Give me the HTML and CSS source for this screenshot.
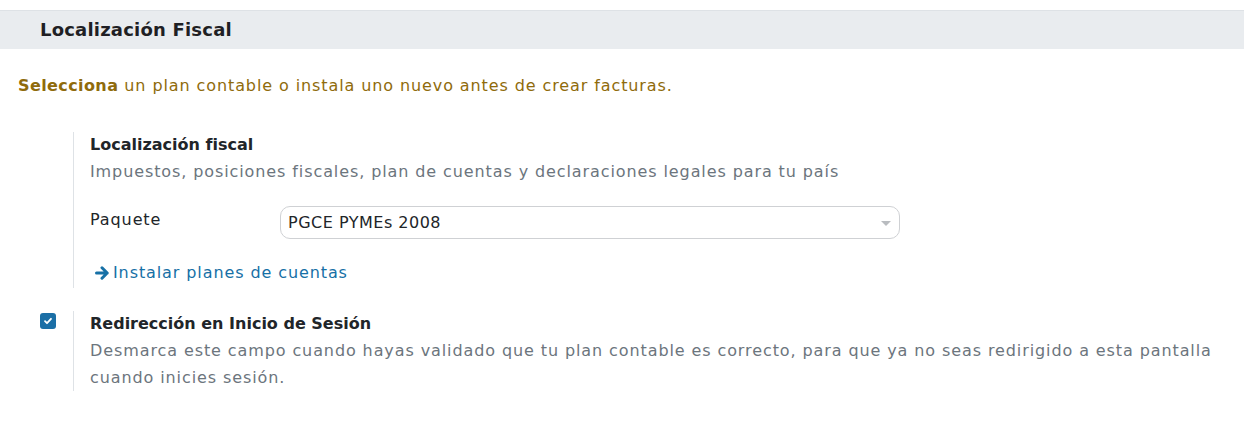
FILE: index.html
```html
<!DOCTYPE html>
<html lang="es">
<head>
<meta charset="utf-8">
<link rel="stylesheet" href="styles.css">
</head>
<body>
<div class="header">Localización Fiscal</div>
<div class="warning"><b>Selecciona</b> un plan contable o instala uno nuevo antes de crear facturas.</div>
<div class="settings">
  <div class="setting setting-first">
    <div class="left"></div>
    <div class="pane">
      <div class="title">Localización fiscal</div>
      <div class="desc">Impuestos, posiciones fiscales, plan de cuentas y declaraciones legales para tu país</div>
      <div class="field">
        <div class="label">Paquete</div>
        <div class="select">
          <span>PGCE PYMEs 2008</span>
          <span class="caret"></span>
        </div>
      </div>
      <a class="link" href="#"><svg class="arrow" width="15" height="14" viewBox="0 0 15 14"><path d="M1.5 7H12.2M7 1.8L12.2 7L7 12.2" fill="none" stroke="currentColor" stroke-width="3" stroke-linecap="round" stroke-linejoin="round"/></svg>Instalar planes de cuentas</a>
    </div>
  </div>
  <div class="setting setting-second">
    <div class="left"><span class="check"><svg width="10" height="10" viewBox="0 0 10 10"><path d="M2 5.2l2 2 4-4.4" fill="none" stroke="#fff" stroke-width="1.8" stroke-linecap="round" stroke-linejoin="round"/></svg></span></div>
    <div class="pane">
      <div class="title">Redirección en Inicio de Sesión</div>
      <div class="desc">Desmarca este campo cuando hayas validado que tu plan contable es correcto, para que ya no seas redirigido a esta pantalla cuando inicies sesión.</div>
    </div>
  </div>
</div>
</body>
</html>
```
FILE: styles.css
```css
body {
  margin: 0;
  background: #fff;
  font-family: "DejaVu Sans", "Open Sans", sans-serif;
  color: #212529;
  font-size: 16px;
  letter-spacing: 0.9px;
}
.header {
  margin-top: 10px;
  border-top: 1px solid #dee2e6;
  background: #e9ecef;
  height: 38px;
  line-height: 38px;
  padding-left: 40px;
  font-weight: 700;
  font-size: 18px;
  letter-spacing: 0.2px;
  color: #1f1f24;
}
.warning {
  padding: 25px 18px 0;
  color: #8f6b0b;
  line-height: 24px;
}
.warning b { font-weight: 700; letter-spacing: 0.4px; }
.settings {
  padding-top: 34px;
}
.setting {
  display: flex;
}
.setting-second { margin-top: 23px; }
.left {
  width: 73px;
  flex: none;
  display: flex;
  justify-content: flex-end;
  padding-right: 17px;
  box-sizing: border-box;
  padding-top: 2px;
}
.pane {
  border-left: 1px solid #dee2e6;
  padding-left: 16px;
  flex: 1;
  padding-right: 14px;
}
.title {
  font-weight: 700;
  line-height: 26px;
  letter-spacing: 0;
  color: #212529;
}
.desc {
  color: #6c757d;
  line-height: 27px;
}
.field {
  display: flex;
  align-items: center;
  margin-top: 21px;
}
.label {
  width: 190px;
  flex: none;
  align-self: flex-start;
  padding-top: 4px;
}
.select {
  width: 620px;
  height: 33px;
  box-sizing: border-box;
  border: 1px solid #cfd1d4;
  border-radius: 10px;
  display: flex;
  align-items: center;
  justify-content: space-between;
  padding: 0 8px 0 7px;
  letter-spacing: 0.5px;
}
.caret {
  width: 0;
  height: 0;
  border-left: 5px solid transparent;
  border-right: 5px solid transparent;
  border-top: 5px solid #b9bcc0;
  margin-top: 2px;
}
.link {
  display: inline-flex;
  align-items: center;
  gap: 3px;
  margin-top: 21px;
  margin-left: 5px;
  color: #1670a6;
  text-decoration: none;
  line-height: 26px;
  padding-bottom: 2px;
}
.arrow { color: #1670a6; }
.check {
  width: 16px;
  height: 16px;
  border-radius: 3px;
  background: #1b6fa6;
  display: flex;
  align-items: center;
  justify-content: center;
}
```
